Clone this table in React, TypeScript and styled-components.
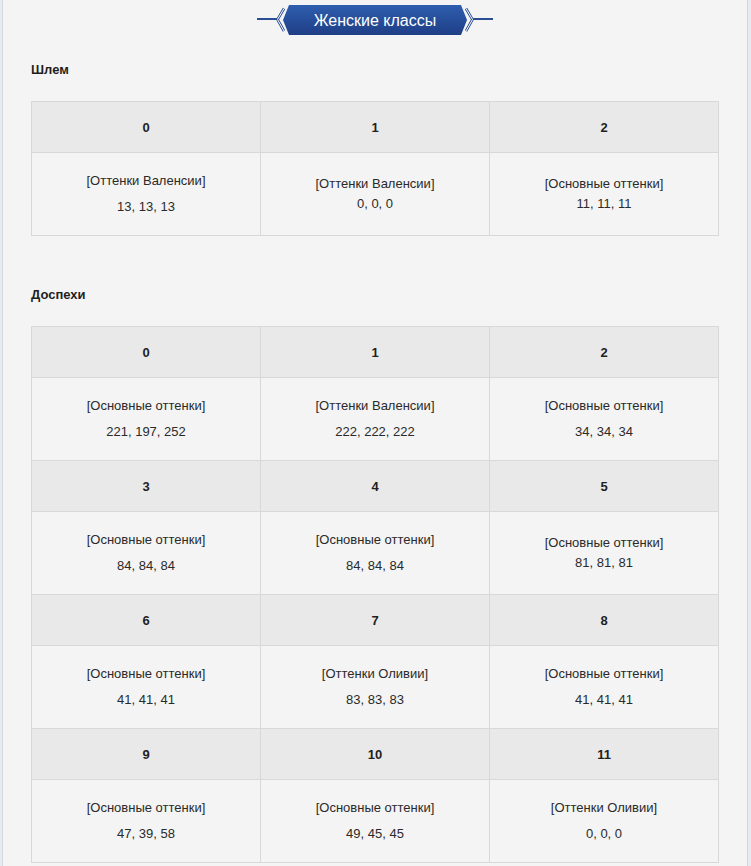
import React from "react";
import styled, { createGlobalStyle } from "styled-components";

const GlobalStyle = createGlobalStyle`
  html, body {
    margin: 0;
    padding: 0;
    background: #e6ebf1;
  }
  body {
    font-family: "Liberation Sans", Arial, sans-serif;
  }
`;

const Page = styled.div`
  padding: 0 3px 0 2px;
`;

const Panel = styled.div`
  background: #f4f4f4;
  border-left: 1px solid #d3d8de;
  border-right: 1px solid #d3d8de;
  padding: 4px 28px 40px;
`;

const BannerRow = styled.div`
  display: flex;
  justify-content: center;
`;

const Banner = styled.div`
  position: relative;
  width: 236px;
  height: 32px;
  display: flex;
  align-items: center;
  justify-content: center;
`;

const BannerArt = styled.svg`
  position: absolute;
  left: 0;
  top: 0;
`;

const BannerTitle = styled.span`
  position: relative;
  color: #ffffff;
  font-size: 16px;
  line-height: 20px;
  margin-top: 1px;
`;

const Section = styled.section<{ $top: number }>`
  margin-top: ${(p) => p.$top}px;
`;

const Heading = styled.h3`
  margin: 0 0 23px;
  font-size: 13px;
  line-height: 16px;
  font-weight: bold;
  color: #1f1f1f;
`;

const Grid = styled.div`
  display: grid;
  grid-template-columns: repeat(3, 1fr);
  border-top: 1px solid #d8d8d8;
  border-left: 1px solid #d8d8d8;
`;

const HeadCell = styled.div`
  height: 51px;
  box-sizing: border-box;
  background: #e9e9e9;
  border-right: 1px solid #d8d8d8;
  border-bottom: 1px solid #d8d8d8;
  display: flex;
  align-items: center;
  justify-content: center;
  font-size: 13px;
  font-weight: bold;
  color: #1f1f1f;
`;

const BodyCell = styled.div<{ $gap: number }>`
  height: 83px;
  box-sizing: border-box;
  background: #f4f4f4;
  border-right: 1px solid #d8d8d8;
  border-bottom: 1px solid #d8d8d8;
  display: flex;
  flex-direction: column;
  align-items: center;
  justify-content: center;
  gap: ${(p) => p.$gap}px;
  font-size: 13px;
  color: #2a2a2a;
`;

const Line = styled.div`
  line-height: 20px;
`;

type Item = { id: number; palette: string; rgb: string; tight?: boolean };

const helmet: Item[] = [
  { id: 0, palette: "[Оттенки Валенсии]", rgb: "13, 13, 13" },
  { id: 1, palette: "[Оттенки Валенсии]", rgb: "0, 0, 0", tight: true },
  { id: 2, palette: "[Основные оттенки]", rgb: "11, 11, 11", tight: true },
];

const armor: Item[] = [
  { id: 0, palette: "[Основные оттенки]", rgb: "221, 197, 252" },
  { id: 1, palette: "[Оттенки Валенсии]", rgb: "222, 222, 222" },
  { id: 2, palette: "[Основные оттенки]", rgb: "34, 34, 34" },
  { id: 3, palette: "[Основные оттенки]", rgb: "84, 84, 84" },
  { id: 4, palette: "[Основные оттенки]", rgb: "84, 84, 84" },
  { id: 5, palette: "[Основные оттенки]", rgb: "81, 81, 81", tight: true },
  { id: 6, palette: "[Основные оттенки]", rgb: "41, 41, 41" },
  { id: 7, palette: "[Оттенки Оливии]", rgb: "83, 83, 83" },
  { id: 8, palette: "[Основные оттенки]", rgb: "41, 41, 41" },
  { id: 9, palette: "[Основные оттенки]", rgb: "47, 39, 58" },
  { id: 10, palette: "[Основные оттенки]", rgb: "49, 45, 45" },
  { id: 11, palette: "[Оттенки Оливии]", rgb: "0, 0, 0" },
];

function ColorTable({ items }: { items: Item[] }) {
  const rows: Item[][] = [];
  for (let i = 0; i < items.length; i += 3) rows.push(items.slice(i, i + 3));
  return (
    <Grid>
      {rows.map((row, ri) => (
        <React.Fragment key={ri}>
          {row.map((it) => (
            <HeadCell key={`h${it.id}`}>{it.id}</HeadCell>
          ))}
          {row.map((it) => (
            <BodyCell key={`b${it.id}`} $gap={it.tight ? 0 : 6}>
              <Line>{it.palette}</Line>
              <Line>{it.rgb}</Line>
            </BodyCell>
          ))}
        </React.Fragment>
      ))}
    </Grid>
  );
}

function TitleBanner({ title }: { title: string }) {
  return (
    <BannerRow>
      <Banner>
        <BannerArt width="236" height="32" viewBox="0 0 236 32">
          <defs>
            <linearGradient id="bannerFill" x1="0" y1="0" x2="0" y2="1">
              <stop offset="0" stopColor="#2e5eae" />
              <stop offset="1" stopColor="#1f3e86" />
            </linearGradient>
          </defs>
          <line x1="0" y1="15" x2="21" y2="15" stroke="#2a4d94" strokeWidth="2" />
          <line x1="215" y1="15" x2="236" y2="15" stroke="#2a4d94" strokeWidth="2" />
          <polyline points="27,4.5 20.5,15.5 27,27" fill="none" stroke="#2a4d94" strokeWidth="2.6" />
          <polyline points="27,4.5 20.5,15.5 27,27" fill="none" stroke="#ffffff" strokeWidth="1" />
          <polyline points="209,4.5 215.5,15.5 209,27" fill="none" stroke="#2a4d94" strokeWidth="2.6" />
          <polyline points="209,4.5 215.5,15.5 209,27" fill="none" stroke="#ffffff" strokeWidth="1" />
          <polygon points="32,1 204,1 210,16 204,31 32,31 26,16" fill="url(#bannerFill)" />
        </BannerArt>
        <BannerTitle>{title}</BannerTitle>
      </Banner>
    </BannerRow>
  );
}

export default function App() {
  return (
    <>
      <GlobalStyle />
      <Page>
        <Panel>
          <TitleBanner title="Женские классы" />
          <Section $top={26}>
            <Heading>Шлем</Heading>
            <ColorTable items={helmet} />
          </Section>
          <Section $top={51}>
            <Heading>Доспехи</Heading>
            <ColorTable items={armor} />
          </Section>
        </Panel>
      </Page>
    </>
  );
}
